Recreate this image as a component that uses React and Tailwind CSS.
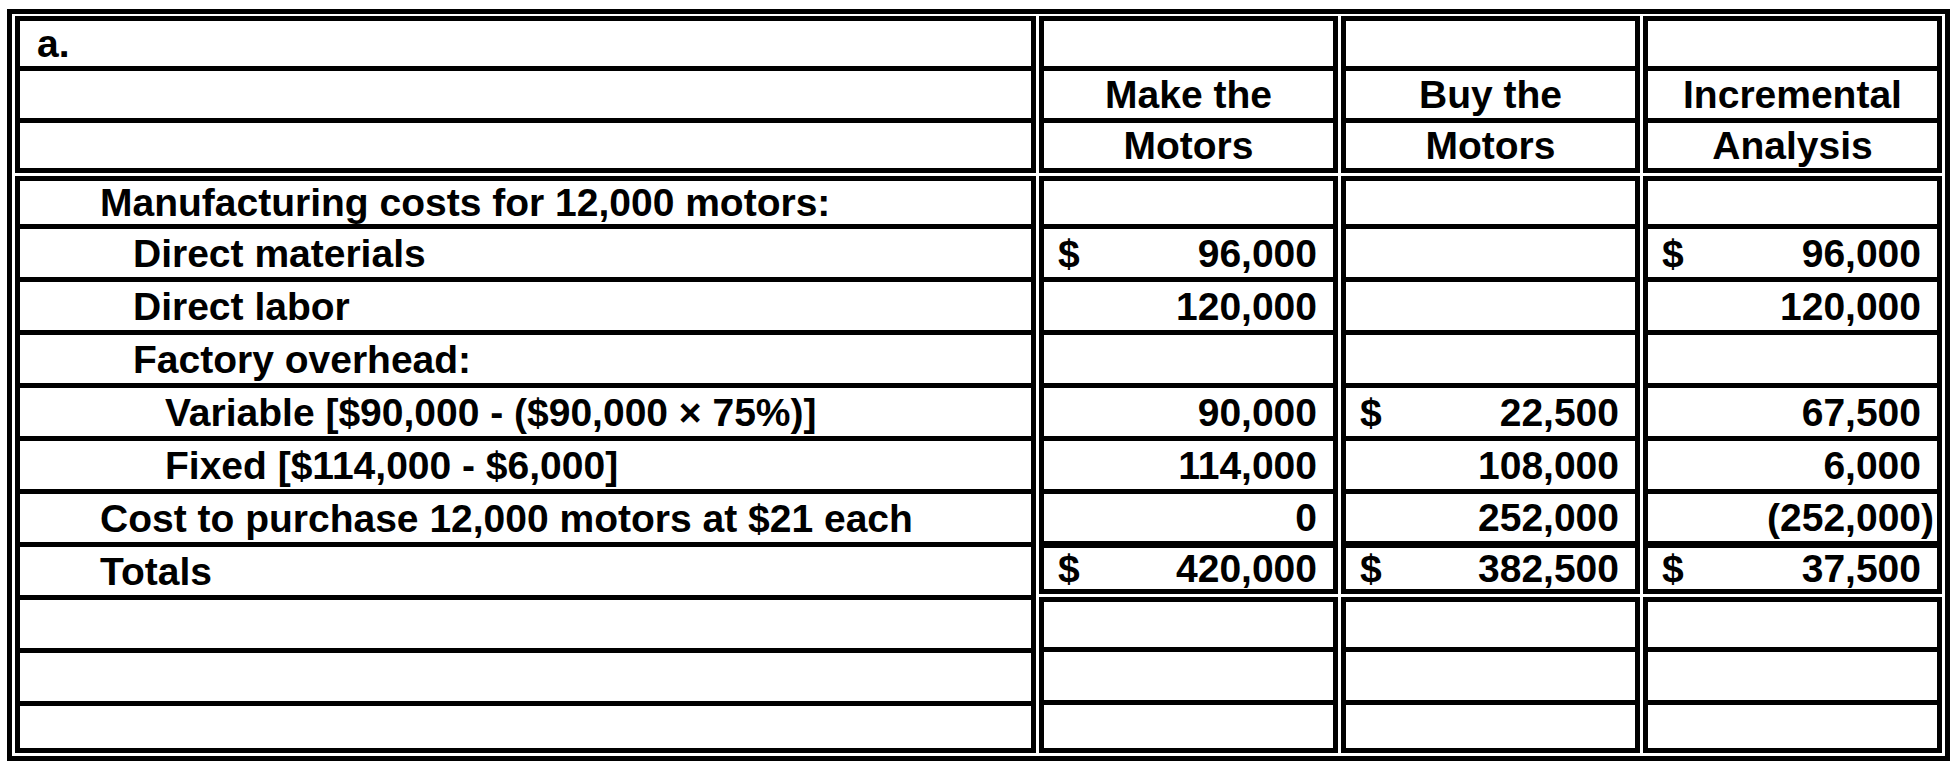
import React from 'react';

// row content heights (px) per group; 5px rules between rows
const HEADER_ROWS = [45, 47, 45];
const LABEL_BODY_ROWS = [43, 48, 48, 48, 48, 48, 48, 48, 48, 48, 42];
const NUM_BODY_ROWS = [43, 48, 48, 48, 48, 48, 47, 41];
const NUM_BOTTOM_ROWS = [45, 48, 43];

const LABELS = [
  { text: 'Manufacturing costs for 12,000 motors:', indent: 'pl-[80px]' },
  { text: 'Direct materials', indent: 'pl-[113px]' },
  { text: 'Direct labor', indent: 'pl-[113px]' },
  { text: 'Factory overhead:', indent: 'pl-[113px]' },
  { text: 'Variable [$90,000 - ($90,000 × 75%)]', indent: 'pl-[145px]' },
  { text: 'Fixed [$114,000 - $6,000]', indent: 'pl-[145px]' },
  { text: 'Cost to purchase 12,000 motors at $21 each', indent: 'pl-[80px]' },
  { text: 'Totals', indent: 'pl-[80px]' },
  { text: '', indent: '' },
  { text: '', indent: '' },
  { text: '', indent: '' },
];

const COLUMNS = [
  {
    head: ['Make the', 'Motors'],
    body: [
      null,
      { sign: true, value: '96,000' },
      { value: '120,000' },
      null,
      { value: '90,000' },
      { value: '114,000' },
      { value: '0' },
      { sign: true, value: '420,000' },
    ],
  },
  {
    head: ['Buy the', 'Motors'],
    body: [
      null,
      null,
      null,
      null,
      { sign: true, value: '22,500' },
      { value: '108,000' },
      { value: '252,000' },
      { sign: true, value: '382,500' },
    ],
  },
  {
    head: ['Incremental', 'Analysis'],
    body: [
      null,
      { sign: true, value: '96,000' },
      { value: '120,000' },
      null,
      { value: '67,500' },
      { value: '6,000' },
      { value: '(252,000)', negative: true },
      { sign: true, value: '37,500' },
    ],
  },
];

const Group = ({ heights, render, thickLast = false }) => (
  <div className="border-[5px] border-black flex flex-col">
    {heights.map((h, i) => {
      const thick = thickLast && i === heights.length - 1;
      const rule = i === 0 ? '' : thick ? 'border-t-[7px] border-black' : 'border-t-[5px] border-black';
      const ruleW = i === 0 ? 0 : thick ? 7 : 5;
      return (
        <div key={i} className={`flex items-center shrink-0 ${rule}`} style={{ height: h + ruleW }}>
          {render(i)}
        </div>
      );
    })}
  </div>
);

const Amount = ({ cell }) => {
  if (!cell) return null;
  return (
    <div className="flex w-full items-center pl-[14px] pr-[16px]">
      <span>{cell.sign ? '$' : ''}</span>
      <span className={`ml-auto ${cell.negative ? 'mr-[-13px]' : ''}`}>{cell.value}</span>
    </div>
  );
};

export default function App() {
  return (
    <div className="bg-white w-[1957px] h-[767px] pt-[9px] pl-[7px] font-['Liberation_Sans',Arial,sans-serif] font-bold text-[39px] leading-none text-black">
      <div className="w-[1943px] h-[752px] border-[5px] border-black pt-[2px] px-[3px] pb-[3px] flex gap-[3px]">
        {/* label column */}
        <div className="w-[1021px] flex flex-col gap-[3px]">
          <Group
            heights={HEADER_ROWS}
            render={(i) => (i === 0 ? <span className="pl-[17px]">a.</span> : null)}
          />
          <Group
            heights={LABEL_BODY_ROWS}
            render={(i) => <span className={`whitespace-nowrap ${LABELS[i].indent}`}>{LABELS[i].text}</span>}
          />
        </div>

        {COLUMNS.map((col, c) => (
          <div key={c} className="w-[299px] flex flex-col gap-[3px]">
            <Group
              heights={HEADER_ROWS}
              render={(i) => (i === 0 ? null : <span className="w-full text-center">{col.head[i - 1]}</span>)}
            />
            <Group heights={NUM_BODY_ROWS} thickLast render={(i) => <Amount cell={col.body[i]} />} />
            <Group heights={NUM_BOTTOM_ROWS} render={() => null} />
          </div>
        ))}
      </div>
    </div>
  );
}
